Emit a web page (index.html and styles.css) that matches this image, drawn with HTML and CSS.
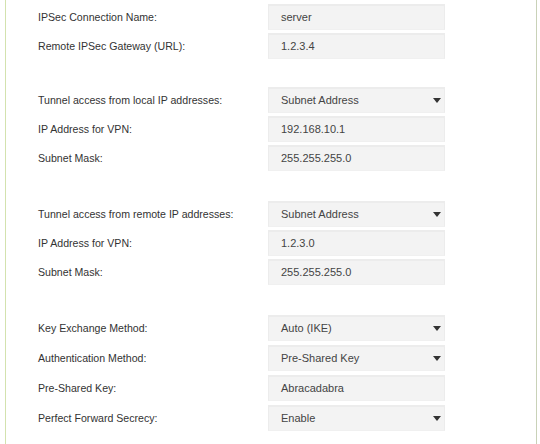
FILE: index.html
```html
<!DOCTYPE html>
<html>
<head>
<meta charset="utf-8">
<link rel="stylesheet" href="styles.css">
</head>
<body>
<div class="panel">
  <div class="group">
    <div class="row"><span class="label">IPSec Connection Name:</span><div class="field">server</div></div>
    <div class="row"><span class="label">Remote IPSec Gateway (URL):</span><div class="field">1.2.3.4</div></div>
  </div>
  <div class="group">
    <div class="row"><span class="label">Tunnel access from local IP addresses:</span><div class="field select">Subnet Address<span class="caret"></span></div></div>
    <div class="row"><span class="label">IP Address for VPN:</span><div class="field">192.168.10.1</div></div>
    <div class="row"><span class="label">Subnet Mask:</span><div class="field">255.255.255.0</div></div>
  </div>
  <div class="group">
    <div class="row"><span class="label">Tunnel access from remote IP addresses:</span><div class="field select">Subnet Address<span class="caret"></span></div></div>
    <div class="row"><span class="label">IP Address for VPN:</span><div class="field">1.2.3.0</div></div>
    <div class="row"><span class="label">Subnet Mask:</span><div class="field">255.255.255.0</div></div>
  </div>
  <div class="group group-last">
    <div class="row"><span class="label">Key Exchange Method:</span><div class="field select">Auto (IKE)<span class="caret"></span></div></div>
    <div class="row"><span class="label">Authentication Method:</span><div class="field select">Pre-Shared Key<span class="caret"></span></div></div>
    <div class="row"><span class="label">Pre-Shared Key:</span><div class="field">Abracadabra</div></div>
    <div class="row"><span class="label">Perfect Forward Secrecy:</span><div class="field select">Enable<span class="caret"></span></div></div>
  </div>
</div>
</body>
</html>
```
FILE: styles.css
```css
html, body {
  margin: 0;
  padding: 0;
  background: #ffffff;
}
.panel {
  margin-left: 5px;
  width: 530px;
  height: 444px;
  border-left: 1px solid #d3e2ae;
  border-right: 1px solid #c9d2b8;
  padding-top: 4px;
  box-sizing: content-box;
  display: flex;
  flex-direction: column;
  gap: 28px;
  font-family: "Liberation Sans", Arial, sans-serif;
}
.group {
  display: flex;
  flex-direction: column;
  gap: 3px;
}
.group + .group + .group {
  margin-top: 2px;
}
.group-last {
  gap: 4px;
}
.row {
  display: grid;
  grid-template-columns: 230px 177px;
  align-items: center;
  padding-left: 32px;
  height: 26px;
}
.label {
  font-size: 10.6px;
  color: #333333;
}
.field {
  position: relative;
  box-sizing: border-box;
  height: 26px;
  background: #f3f3f3;
  border: 1px solid #ececec;
  border-bottom-color: #f0f0f0;
  box-shadow: inset 0 1px 1px rgba(0,0,0,0.03);
  font-size: 11px;
  color: #444444;
  padding-left: 12px;
  line-height: 24px;
}
.caret {
  position: absolute;
  right: 3px;
  top: 10px;
  width: 0;
  height: 0;
  border-left: 4px solid transparent;
  border-right: 4px solid transparent;
  border-top: 5px solid #333333;
}
```
